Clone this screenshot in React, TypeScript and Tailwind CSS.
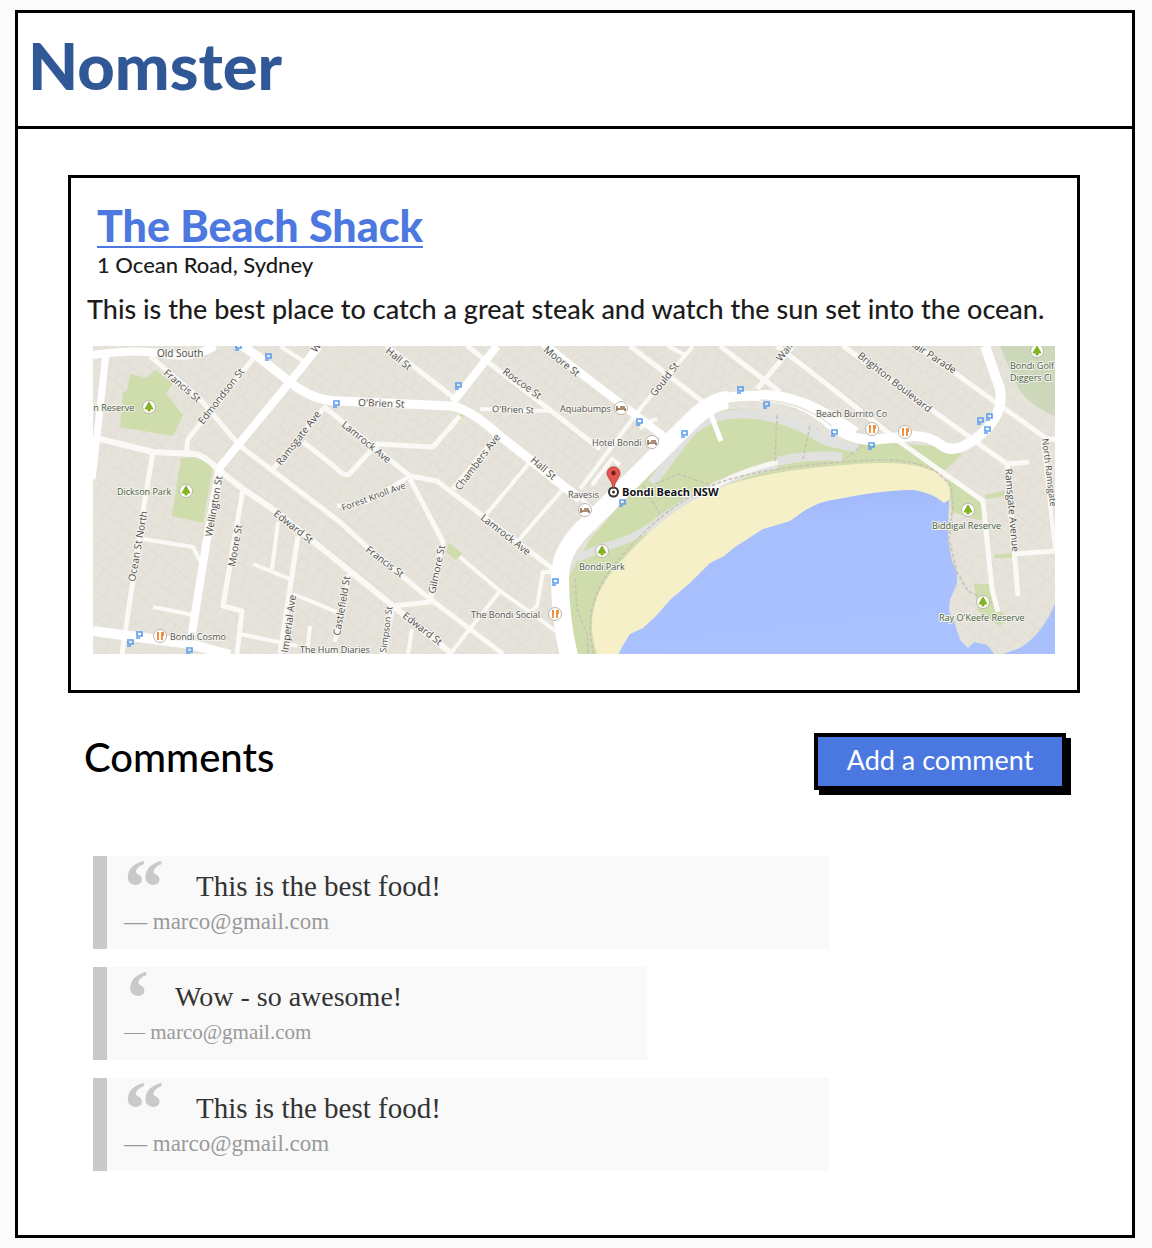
import React from "react";

type Road = { d: string; w: number };

const minorRoads: Road[] = [
  { d: "M150 357 L200 400 L240 447 L273 472 L340 523 L367 548 L430 600 L503 655", w: 5 },
  { d: "M253 360 L207 417 L190 437 Q186 442 187 455", w: 5 },
  { d: "M100 440 L153 453 L194 455 Q204 456 220 472 L243 490 L277 513 L335 560 L393 607 L452 655", w: 6 },
  { d: "M153 453 L143 513 L122 655", w: 5 },
  { d: "M143 540 L193 548 L200 562", w: 4 },
  { d: "M153 608 L193 616", w: 4 },
  { d: "M243 490 L223 607 L242 612 L237 655", w: 5 },
  { d: "M240 635 L297 647", w: 4 },
  { d: "M278 523 L272 570", w: 4 },
  { d: "M253 565 L290 580", w: 4 },
  { d: "M293 595 L337 613", w: 4 },
  { d: "M298 537 L280 655", w: 5 },
  { d: "M310 627 L307 655", w: 4 },
  { d: "M323 410 L273 470", w: 5 },
  { d: "M303 443 L335 468 Q346 481 352 472 L377 445 L433 448 L460 417", w: 5 },
  { d: "M323 407 L410 477 L437 482 L483 517 L557 573", w: 5 },
  { d: "M410 477 L367 503 L337 507", w: 4 },
  { d: "M410 480 L443 543 L430 603 L393 607 L383 655", w: 5 },
  { d: "M350 573 L335 643", w: 4 },
  { d: "M412 630 L408 655", w: 4 },
  { d: "M497 437 L453 490", w: 5 },
  { d: "M530 463 L485 517", w: 4 },
  { d: "M563 490 L517 543", w: 4 },
  { d: "M460 558 L500 592 L530 613 L557 633", w: 4 },
  { d: "M500 592 L450 655", w: 4 },
  { d: "M557 573 L543 573 L537 607 L530 613", w: 4 },
  { d: "M387 347 L453 398", w: 5 },
  { d: "M467 347 L550 411 L600 450", w: 5 },
  { d: "M480 410 L550 412", w: 4 },
  { d: "M693 347 L640 410 L580 490", w: 4 },
  { d: "M630 347 L703 403", w: 5 },
  { d: "M668 347 L687 357", w: 4 },
  { d: "M720 347 L780 393", w: 5 },
  { d: "M793 347 L757 390", w: 5 },
  { d: "M777 347 L810 372 L900 443 L983 502 L992 590 L998 613", w: 5 },
  { d: "M843 347 L1007 465 L1029 463", w: 5 },
  { d: "M913 344 L1047 440 L1056 440", w: 5 },
  { d: "M1007 467 L1018 597", w: 5 },
  { d: "M1013 555 L1056 552", w: 5 },
  { d: "M1043 440 L1055 550", w: 4 },
  { d: "M280 347 L303 362", w: 4 },
  { d: "M572 490 L594 512", w: 4 },
  { d: "M592 486 L612 460 L620 466", w: 4 },
  { d: "M640 430 L650 422 L657 420", w: 4 },
];

const majorRoads: Road[] = [
  { d: "M106 354 L97 437 L92 480", w: 7 },
  { d: "M93 356 Q130 350 160 354 Q190 362 215 347", w: 8 },
  { d: "M240 345 L257 357 L290 383 Q312 402 340 402 L450 407 Q468 408 500 437 L580 500", w: 9 },
  { d: "M319 347 L290 383 L220 468 L207 540 L191 640", w: 8 },
  { d: "M93 632 L190 645 L230 656", w: 10 },
  { d: "M497 347 L453 403", w: 8 },
  { d: "M543 344 L570 366 L667 440", w: 8 },
  { d: "M985 347 L1000 390 Q1005 418 975 440 Q954 456 941 446 Q928 436 912 437 L870 441 Q847 440 829 424 Q800 398 760 397 Q722 395 703 409 L650 466", w: 10 },
  { d: "M760 397 Q800 395 855 434", w: 12 },
  { d: "M728 401 Q712 402 692 421 L590 523 Q560 549 560 577 Q560 620 569 657", w: 18 },
  { d: "M708 408 L721 442", w: 5 },
];

const labels: { t: string; x: number; y: number; r: number; s?: number }[] = [
  { t: "Old South", x: 157, y: 358, r: 0 },
  { t: "Francis St", x: 163, y: 375, r: 40 },
  { t: "Edmondson St", x: 203, y: 426, r: -52 },
  { t: "Ramsgate Ave", x: 281, y: 467, r: -52 },
  { t: "Wellington St", x: 212, y: 538, r: -80 },
  { t: "Moore St", x: 235, y: 568, r: -80 },
  { t: "Ocean St North", x: 135, y: 583, r: -80 },
  { t: "Edward St", x: 273, y: 516, r: 38 },
  { t: "Imperial Ave", x: 288, y: 654, r: -82 },
  { t: "Castlefield St", x: 340, y: 637, r: -80 },
  { t: "O'Brien St", x: 358, y: 407, r: 2 },
  { t: "O'Brien St", x: 492, y: 413, r: 2, s: 9 },
  { t: "Hall St", x: 385, y: 353, r: 39 },
  { t: "Hall St", x: 530, y: 462, r: 41 },
  { t: "Lamrock Ave", x: 341, y: 427, r: 39 },
  { t: "Lamrock Ave", x: 480, y: 520, r: 38 },
  { t: "Forest Knoll Ave", x: 343, y: 512, r: -20, s: 9 },
  { t: "Chambers Ave", x: 460, y: 492, r: -53 },
  { t: "Francis St", x: 365, y: 552, r: 37 },
  { t: "Gilmore St", x: 435, y: 595, r: -78 },
  { t: "Edward St", x: 402, y: 618, r: 38 },
  { t: "Simpson St", x: 386, y: 654, r: -82, s: 9 },
  { t: "Roscoe St", x: 502, y: 374, r: 36 },
  { t: "Moore St", x: 543, y: 352, r: 38 },
  { t: "Gould St", x: 655, y: 398, r: -52 },
  { t: "Wairoa", x: 781, y: 363, r: -52 },
  { t: "Brighton Boulevard", x: 857, y: 358, r: 38 },
  { t: "Blair Parade", x: 906, y: 344, r: 33 },
  { t: "Ramsgate Avenue", x: 1005, y: 470, r: 85 },
  { t: "North Ramsgate", x: 1042, y: 440, r: 83, s: 9 },
  { t: "W", x: 316, y: 354, r: -52 },
  { t: "The Hum Diaries", x: 300, y: 654, r: 0, s: 9 },
];

const places: { t: string; x: number; y: number; c: string }[] = [
  { t: "in Reserve", x: 91, y: 412, c: "#46603d" },
  { t: "Dickson Park", x: 117, y: 496, c: "#46603d" },
  { t: "Bondi Cosmo", x: 170, y: 641, c: "#555" },
  { t: "The Bondi Social", x: 471, y: 619, c: "#555" },
  { t: "Aquabumps", x: 560, y: 413, c: "#555" },
  { t: "Hotel Bondi", x: 592, y: 447, c: "#555" },
  { t: "Ravesis", x: 568, y: 499, c: "#555" },
  { t: "Bondi Park", x: 579, y: 571, c: "#46603d" },
  { t: "Beach Burrito Co", x: 816, y: 418, c: "#555" },
  { t: "Biddigal Reserve", x: 932, y: 530, c: "#46603d" },
  { t: "Ray O'Keefe Reserve", x: 939, y: 622, c: "#46603d" },
  { t: "Bondi Golf", x: 1010, y: 370, c: "#46603d" },
  { t: "Diggers Cl", x: 1010, y: 382, c: "#46603d" },
];

const stops = [
  [268, 358], [336, 405], [458, 387], [555, 583], [684, 435], [639, 423], [740, 391], [766, 406],
  [834, 434], [871, 447], [980, 422], [989, 418], [987, 431], [139, 636], [130, 644], [189, 652], [238, 348], [622, 504],
];

const trees = [[149, 408], [186, 492], [602, 552], [968, 511], [983, 603], [1037, 352]];
const food = [[160, 637], [555, 615], [872, 430], [905, 433]];
const beds = [[621, 409], [652, 443], [585, 511]];

function Roads({ items, color }: { items: Road[]; color: string }) {
  return (
    <g fill="none" stroke={color} strokeLinejoin="round" strokeLinecap="butt">
      {items.map((r, i) => (
        <path key={i} d={r.d} strokeWidth={r.w} />
      ))}
    </g>
  );
}

function BeachMap() {
  return (
    <svg
      viewBox="93 347 962 308"
      className="block w-full"
      role="img"
      aria-label="Map of Bondi Beach NSW"
      fontFamily='"Open Sans", sans-serif'
    >
      <defs>
        <pattern id="lots" width="34" height="22" patternUnits="userSpaceOnUse" patternTransform="rotate(38)">
          <path d="M0 0H34M0 11H34M8 0V11M19 0V11M28 0V11M4 11V22M14 11V22M25 11V22" stroke="#dfdbd3" strokeWidth="0.8" fill="none" />
        </pattern>
        <linearGradient id="sea" x1="0" y1="0" x2="0.25" y2="1">
          <stop offset="0" stopColor="#98b2fb" />
          <stop offset="0.3" stopColor="#a8bffd" />
          <stop offset="1" stopColor="#a9c1fe" />
        </linearGradient>
      </defs>
      <rect x="93" y="347" width="962" height="308" fill="#e6e3db" />
      <rect x="93" y="347" width="962" height="308" fill="url(#lots)" />

      <g fill="#cfdcab">
        <path d="M130 375 L147 379 L155 371 L173 384 L166 395 L183 416 L173 437 L120 428 L123 393 L127 392Z" />
        <path d="M181 459 L200 458 L213 467 L203 524 L172 517Z" />
        <path d="M457 416 L465 415 L459 424 L454 422Z" />
        <path d="M449 544 L462 554 L456 561 L446 553Z" />
        <path d="M564 656 L562 590 L590 540 L690 428 Q712 408 745 410 Q785 411 830 440 L935 447 L962 455 L947 470 L930 475 L700 500 L620 565 L598 656Z" />
        <path d="M947 478 L983 502 L985 520 L978 521 L952 513Z" />
        <path d="M974 585 L993 585 L1000 611 L1007 618 L1000 627 L978 612Z" />
        <path d="M985 496 L1004 492 L1005 497 L986 500Z M994 556 L1012 554 L1012 559 L994 559Z" />
      </g>
      <path d="M1000 347 H1055 V417 Q1024 405 1014 380Z" fill="#cdd7b9" />

      <g fill="none" stroke="#e1e2df">
        <path d="M652 484 L690 434 Q711 413 750 415 Q790 418 825 442 L858 449" strokeWidth="9" />
        <path d="M578 559 L603 548 Q635 541 661 520 L700 494 Q740 473 778 466" strokeWidth="8" />
        <path d="M778 462 Q815 455 842 458" strokeWidth="9" />
      </g>
      <path d="M700 496 Q735 473 778 463" fill="none" stroke="#f7f6f2" strokeWidth="5" />

      <path
        d="M618 655 L597 655 Q582 612 611 574 Q668 505 730 485 Q785 468 877 464 Q915 463 935 473 Q950 483 950 493 L948 506 L910 496 L840 560 L660 640Z"
        fill="#f6f0c9"
      />
      <path
        d="M618 656 L622 648 L630 635 L643 629 L655 618 L671 600 L690 584 L710 564 L724 557 L735 548 L763 530 L777 526 L790 522 L804 512 Q820 502 838 500 L860 496 Q890 491 914 491 Q933 494 944 504 L949 501 L948 540 L952 562 L957 573 L957 584 L950 601 L949 612 L954 622 L960 641 L968 649 L974 643 L987 646 L995 656Z"
        fill="url(#sea)"
      />
      <path d="M1056 602 Q1044 634 1020 649 L1000 656 H1056Z" fill="#a9c0fd" />

      <g fill="none" stroke="#c9c2b4" strokeWidth="1.5" strokeDasharray="4 2">
        <path d="M594 655 Q582 612 608 574 Q665 500 730 480 Q785 465 877 461 Q918 460 938 474 L951 487 L953 505 L949 540 L957 573 L968 592 L993 604" />
        <path d="M575 580 L577 610 L587 635 L588 655 M640 481 L662 519 M655 485 L679 475 L710 486 M777 416 L775 462 M810 427 L803 460 M846 459 L862 447" />
      </g>

      <Roads items={minorRoads} color="#faf9f6" />
      <Roads items={majorRoads} color="#ffffff" />
      <path d="M760 401 Q800 402 832 427" fill="none" stroke="#e4e1d8" strokeWidth="1.5" />

      <g fontSize="10" fill="#4d4d4a" stroke="#f7f6f2" strokeWidth="2" paintOrder="stroke" strokeLinejoin="round">
        {labels.map((l, i) => (
          <text key={i} transform={`translate(${l.x} ${l.y}) rotate(${l.r})`} fontSize={l.s ?? 10}>
            {l.t}
          </text>
        ))}
      </g>

      <g fill="none" stroke="#5b9cf0" strokeWidth="1.6">
        {stops.map(([x, y], i) => (
          <path key={i} d={`M${x - 3} ${y - 3}H${x + 3}V${y + 1}H${x - 2}V${y - 2}M${x - 3} ${y + 3}H${x + 1}`} />
        ))}
      </g>

      {[...trees, ...food, ...beds].map(([x, y], i) => (
        <circle key={i} cx={x} cy={y} r="6.5" fill="#fff" stroke="#b9b5ac" strokeWidth="1" />
      ))}
      {trees.map(([x, y], i) => (
        <path key={i} d={`M${x} ${y - 5}L${x + 4} ${y + 2}H${x + 1}V${y + 4}H${x - 1}V${y + 2}H${x - 4}Z`} fill="#84b222" stroke="#84b222" strokeLinejoin="round" />
      ))}
      {food.map(([x, y], i) => (
        <path key={i} d={`M${x - 2} ${y - 4}V${y + 4}M${x - 3} ${y - 2}H${x - 1}M${x + 2} ${y + 4}V${y - 3}H${x + 3}V${y}`} fill="none" stroke="#ee8a31" strokeWidth="1.8" />
      ))}
      {beds.map(([x, y], i) => (
        <path key={i} d={`M${x - 4} ${y - 2}V${y + 3}M${x - 4} ${y + 1}H${x + 4}V${y + 3}M${x - 1} ${y - 1}H${x + 4}`} fill="none" stroke="#8f6a48" strokeWidth="1.6" />
      ))}

      <g fontSize="9" stroke="#f4f3ee" strokeWidth="2" paintOrder="stroke" strokeLinejoin="round">
        {places.map((p, i) => (
          <text key={i} x={p.x} y={p.y} fill={p.c}>
            {p.t}
          </text>
        ))}
      </g>

      <circle cx="613.5" cy="493" r="4.5" fill="#fff" stroke="#333" strokeWidth="2" />
      <circle cx="613.5" cy="493" r="1.5" fill="#333" />
      <path d="M613.5 490 Q612 483 608.500 478.500 A6.500 6.500 0 1 1 618.500 478.500 Q615 483 613.500 490Z" fill="#e2544c" stroke="#b43a33" strokeWidth="0.8" />
      <circle cx="613.5" cy="474" r="2.2" fill="#6e1f1b" />
      <text x="622" y="497" fontSize="11" fontWeight="700" fill="#111" stroke="#fff" strokeWidth="2" paintOrder="stroke">
        Bondi Beach NSW
      </text>
    </svg>
  );
}

type Comment = { text: string; author: string; mark: string; short?: boolean };

const comments: Comment[] = [
  { text: "This is the best food!", author: "marco@gmail.com", mark: "“" },
  { text: "Wow - so awesome!", author: "marco@gmail.com", mark: "‘", short: true },
  { text: "This is the best food!", author: "marco@gmail.com", mark: "“" },
];

function Quote({ c }: { c: Comment }) {
  return (
    <blockquote
      className={`w-full border-l-[14px] border-[#c9c9c9] bg-[#f9f9f9] pb-3 pl-[17px] font-['Liberation_Serif',serif] ${
        c.short ? "max-w-[554px]" : "max-w-[736px]"
      }`}
    >
      <div className="flex h-[50px] items-end">
        <span
          aria-hidden="true"
          className={`h-[50px] shrink-0 text-[80px] leading-[62px] font-bold text-[#c9c9c9] ${c.short ? "w-[51px]" : "w-[72px]"}`}
        >
          {c.mark}
        </span>
        <p className={`leading-[40px] text-[#333] ${c.short ? "text-[28px]" : "text-[29px]"}`}>{c.text}</p>
      </div>
      <footer className={`leading-[31px] text-[#999] ${c.short ? "text-[21px]" : "text-[23px]"}`}>
        — {c.author}
      </footer>
    </blockquote>
  );
}

export default function App() {
  return (
    <div className="min-h-screen bg-[#fbfbfb] py-2.5 pr-[17px] pl-[15px] font-['Lato',sans-serif] text-[#1c1c1c]">
      <div className="border-[3px] border-black bg-white pb-16">
        <header className="flex h-[116px] items-start border-b-[3px] border-black px-2.5 pt-3.5">
          <h1 className="text-[65px] leading-[76px] font-black text-[#305796]">Nomster</h1>
        </header>
        <main className="pr-[52px] pl-[50px] pt-[46px]">
          <section className="border-[3px] border-black px-4 pt-7 pb-9">
            <div className="px-2.5">
              <h2 className="flex">
                <a href="#shack" className="border-b-2 border-[#4c78e0] text-[43px] leading-[40px] font-black text-[#4c78e0]">
                  The Beach Shack
                </a>
              </h2>
              <p className="mt-0.5 text-[22px] leading-[30px] font-medium">1 Ocean Road, Sydney</p>
            </div>
            <p className="mt-3 text-[27px] leading-[34px] font-medium whitespace-nowrap">
              This is the best place to catch a great steak and watch the sun set into the ocean.
            </p>
            <div className="mt-5 px-1.5">
              <BeachMap />
            </div>
          </section>
          <div className="mt-10 flex items-start justify-between pr-3.5 pl-4">
            <h2 className="text-[40px] leading-[48px] font-medium text-black">Comments</h2>
            <button
              type="button"
              className="h-[57px] w-[252px] border-4 border-black bg-[#4a77e0] pb-1 text-[27px] leading-[40px] text-white shadow-[5px_5px_0_0_#000]"
            >
              Add a comment
            </button>
          </div>
          <div className="mt-[66px] flex flex-col gap-[18px] pl-[25px]">
            {comments.map((c, i) => (
              <Quote key={i} c={c} />
            ))}
          </div>
        </main>
      </div>
    </div>
  );
}
